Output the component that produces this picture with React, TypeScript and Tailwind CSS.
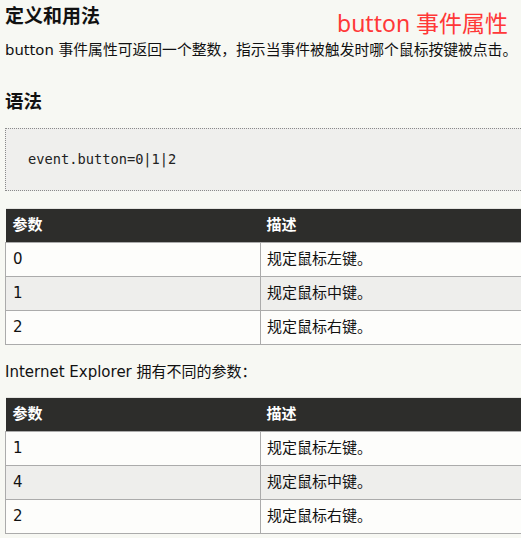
import React from "react";

const bodyFont = "font-['DejaVu_Sans','Noto_Sans_CJK_SC',sans-serif]";

interface Row {
  code: string;
  desc: string;
}

const standardRows: Row[] = [
  { code: "0", desc: "规定鼠标左键。" },
  { code: "1", desc: "规定鼠标中键。" },
  { code: "2", desc: "规定鼠标右键。" },
];

const ieRows: Row[] = [
  { code: "1", desc: "规定鼠标左键。" },
  { code: "4", desc: "规定鼠标中键。" },
  { code: "2", desc: "规定鼠标右键。" },
];

function ParamTable({ rows }: { rows: Row[] }) {
  return (
    <table className="w-[540px] border-collapse table-fixed text-[15px] text-[#111]">
      <colgroup>
        <col className="w-[255px]" />
        <col />
      </colgroup>
      <thead>
        <tr className="h-[34px] bg-[#2d2d2b] text-white">
          <th className="px-[7px] text-left font-bold border-t border-[#e4e4e0]">参数</th>
          <th className="px-[6px] text-left font-bold border-t border-[#e4e4e0]">描述</th>
        </tr>
      </thead>
      <tbody>
        {rows.map((row, i) => (
          <tr
            key={i}
            className={i % 2 === 1 ? "h-[34px] bg-[#eeeeec]" : "h-[34px] bg-[#fdfdfb]"}
          >
            <td className="px-[7px] border border-[#ababab]">{row.code}</td>
            <td className="px-[6px] border border-[#ababab]">{row.desc}</td>
          </tr>
        ))}
      </tbody>
    </table>
  );
}

export default function App() {
  return (
    <div className={`relative w-[521px] h-[538px] overflow-hidden bg-[#f7f8f3] pl-[5px] ${bodyFont}`}>
      {/* Caption overlay from the video */}
      <div className="absolute left-[337px] top-[9px] text-[23px] leading-[28px] text-[#ff3838] font-['Noto_Sans','Noto_Sans_CJK_SC',sans-serif]">
        button 事件属性
      </div>

      <h2 className="pt-[4px] text-[19px] leading-[24px] font-bold text-[#111]">定义和用法</h2>

      <p className="mt-[12px] text-[14.8px] leading-[20px] text-[#111] whitespace-nowrap">
        button 事件属性可返回一个整数，指示当事件被触发时哪个鼠标按键被点击。
      </p>

      <h3 className="mt-[30px] text-[18.5px] leading-[24px] font-bold text-[#111]">语法</h3>

      <div className="mt-[14px] w-[540px] h-[63px] flex items-center bg-[#efefed] border-t border-b border-l border-dotted border-[#8a8a8a] pl-[22px]">
        <code className="font-['DejaVu_Sans_Mono',monospace] text-[13.7px] text-[#222]">
          event.button=0|1|2
        </code>
      </div>

      <div className="mt-[17px]">
        <ParamTable rows={standardRows} />
      </div>

      <p className="mt-[17px] text-[15px] leading-[20px] text-[#111]">
        Internet Explorer 拥有不同的参数：
      </p>

      <div className="mt-[15px]">
        <ParamTable rows={ieRows} />
      </div>
    </div>
  );
}
